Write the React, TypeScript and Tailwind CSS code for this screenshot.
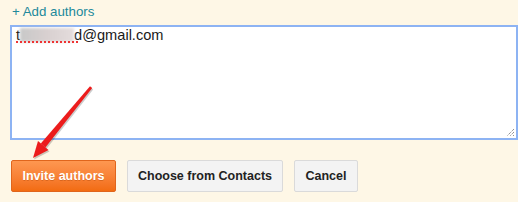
export default function App() {
  return (
    <div className="relative w-[531px] h-[202px] bg-white font-['Liberation_Sans',Arial,sans-serif]">
      <div className="w-[518px] h-full bg-[#fef7e6] pl-[10px] pt-[4px]">
        {/* Add authors link */}
        <div className="pl-[2px] text-[13.3px] leading-[16px] text-[#21899b]">+ Add authors</div>

        {/* Email box */}
        <div className="relative mt-[5px] w-[508px] h-[115px] border-2 border-[#8db3f3] bg-white px-[4px] text-[14.6px] leading-[16px] text-[#1a1a1a]">
          <span>t</span>
          <span className="inline-block align-[-2px] w-[54px] h-[14px] bg-gradient-to-r from-[#c8c8c8] via-[#d8d0d0] to-[#e4dcdc] blur-[1.5px]" />
          <span>d@gmail.com</span>
          <span className="absolute left-[4px] top-[14px] w-[62px] border-b-2 border-dotted border-[#e33]" />
          <svg className="absolute right-[1px] bottom-[1px]" width="9" height="9" viewBox="0 0 9 9">
            <path d="M8 1L1 8M8 4L4 8M8 7L7 8" stroke="#666" strokeWidth="1" strokeDasharray="1 1" />
          </svg>
        </div>

        {/* Actions */}
        <div className="mt-[20px] ml-[1px] flex gap-[11px] text-[12.5px] font-bold">
          <button className="w-[105px] h-[32px] rounded-[2px] border border-[#e0651c] bg-gradient-to-b from-[#fe9750] to-[#f26c10] text-white [text-shadow:0_1px_0_rgba(160,60,0,0.35)]">
            Invite authors
          </button>
          <button className="w-[156px] h-[32px] rounded-[2px] border border-[#dadada] bg-[#f3f3f3] text-[#222]">
            Choose from Contacts
          </button>
          <button className="w-[64px] h-[32px] rounded-[2px] border border-[#dadada] bg-[#f3f3f3] text-[#222]">
            Cancel
          </button>
        </div>
      </div>

      {/* Red annotation arrow */}
      <svg className="absolute left-0 top-0 pointer-events-none" width="531" height="202">
        <g transform="translate(1,1.5)" fill="rgba(0,0,0,0.2)">
          <polygon points="92.2,88 90,86.2 40.8,143.6 45.4,147.6" />
          <polygon points="33,158 48.5,150 38,141" />
        </g>
        <g fill="#ec1c1c">
          <polygon points="92.2,88 90,86.2 40.8,143.6 45.4,147.6" />
          <polygon points="33,158 48.5,150 38,141" />
        </g>
      </svg>
    </div>
  );
}
